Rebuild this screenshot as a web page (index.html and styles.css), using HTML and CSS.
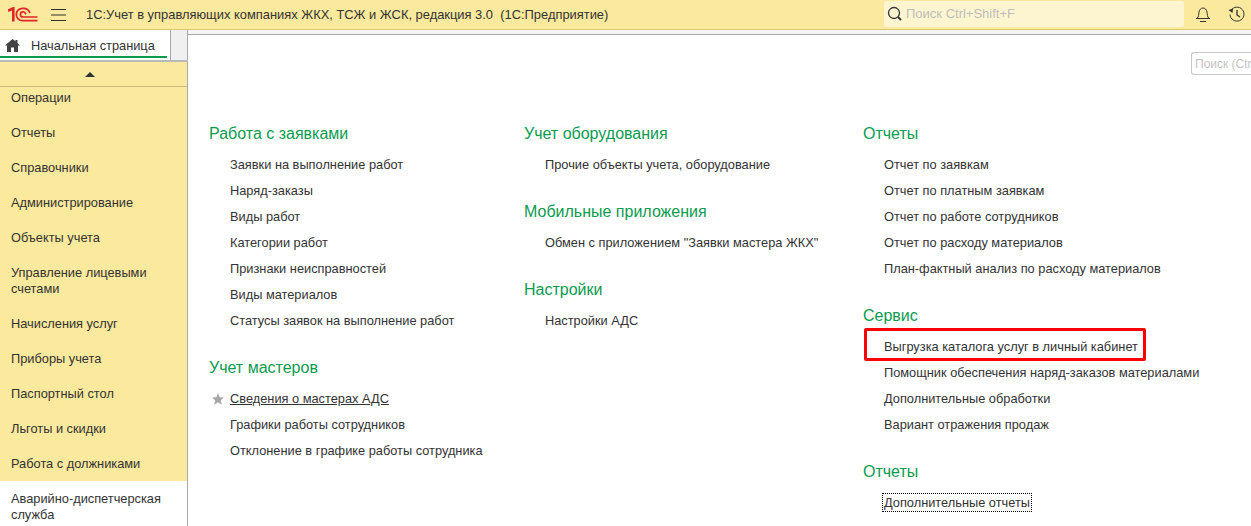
FILE: index.html
```html
<!DOCTYPE html>
<html lang="ru">
<head>
<meta charset="utf-8">
<title>1С:Учет</title>
<link rel="stylesheet" href="styles.css">
</head>
<body>
<header class="topbar">
  <svg class="logo" width="30" height="15" viewBox="0 0 30 15"><g fill="none" stroke="#e0262b"><path d="M0 3.800 L5.300 1.300 V14.500" stroke-width="2.600"/><path d="M29.500 13.700 H14.500 a6.200 6.200 0 0 1 0 -12.400 h1 q4.500 0 6.500 4.700" stroke-width="1.800"/><path d="M29.500 10 H15 a2.600 2.600 0 0 1 0 -5.200 h.5 q1.500 0 2.500 2.600" stroke-width="1.700"/></g></svg>
  <svg class="burger" width="15" height="12" viewBox="0 0 15 12"><path d="M0 .5h15M0 6h15M0 11.500h15" stroke="#333" stroke-width="1"/></svg>
  <div class="apptitle">1С:Учет в управляющих компаниях ЖКХ, ТСЖ и ЖСК, редакция 3.0&nbsp; (1С:Предприятие)</div>
  <div class="globalsearch">
    <svg width="16" height="16" viewBox="0 0 16 16"><circle cx="7" cy="7" r="5.500" fill="none" stroke="#333" stroke-width="1.300"/><path d="M11 11l3 3" stroke="#333" stroke-width="2"/></svg>
    <span>Поиск Ctrl+Shift+F</span>
  </div>
  <svg class="bell" width="16" height="17" viewBox="0 0 16 17"><path d="M2 12.500c2-2 1.500-4 2-6.500C4.500 3.500 6 2 8 2s3.500 1.500 4 4c.5 2.500 0 4.500 2 6.500z" fill="none" stroke="#333"/><path d="M1 12.500h14M5 15.500h6" stroke="#333"/></svg>
  <svg class="history" width="17" height="17" viewBox="0 0 17 17"><path d="M3 4.500A7 7 0 1 1 2 8.500" fill="none" stroke="#333"/><path d="M0.500 4 L5 2.500 4.500 7z" fill="#333"/><path d="M9 4v5l3 2" fill="none" stroke="#333" stroke-width="1.300"/></svg>
</header>
<div class="workspace">
  <aside class="left">
    <div class="tabrow">
      <div class="tab">
        <svg width="15" height="13" viewBox="0 0 15 13"><path d="M7.500 0L0 6.500h2V13h4V8.500h3V13h4V6.500h2L12.500 4V1h-2v1.200z" fill="#444"/></svg>
        <span>Начальная страница</span>
      </div>
      <div class="tabgap"></div>
    </div>
    <nav class="sections">
      <div class="scrollup"><i class="arrow"></i></div>
      <div class="section first">Операции</div>
      <div class="section">Отчеты</div>
      <div class="section">Справочники</div>
      <div class="section">Администрирование</div>
      <div class="section">Объекты учета</div>
      <div class="section">Управление лицевыми счетами</div>
      <div class="section">Начисления услуг</div>
      <div class="section">Приборы учета</div>
      <div class="section">Паспортный стол</div>
      <div class="section">Льготы и скидки</div>
      <div class="section">Работа с должниками</div>
      <div class="section active">Аварийно-диспетчерская служба</div>
    </nav>
  </aside>
  <main class="content">
    <div class="findbar"><input class="findbox" placeholder="Поиск (Ctrl+F)"></div>
    <div class="columns">
      <div class="col">
        <section class="group">
          <h2>Работа с заявками</h2>
          <a>Заявки на выполнение работ</a>
          <a>Наряд-заказы</a>
          <a>Виды работ</a>
          <a>Категории работ</a>
          <a>Признаки неисправностей</a>
          <a>Виды материалов</a>
          <a>Статусы заявок на выполнение работ</a>
        </section>
        <section class="group">
          <h2>Учет мастеров</h2>
          <a class="fav"><svg class="star" width="12" height="12" viewBox="0 0 12 12"><path d="M6 0l1.700 4.200 4.300.3-3.300 2.800 1.100 4.400L6 9.300 2.200 11.700l1.100-4.400L0 4.500l4.300-.3z" fill="#a6a6a6"/></svg><u>Сведения о мастерах АДС</u></a>
          <a>Графики работы сотрудников</a>
          <a>Отклонение в графике работы сотрудника</a>
        </section>
      </div>
      <div class="col second">
        <section class="group">
          <h2>Учет оборудования</h2>
          <a>Прочие объекты учета, оборудование</a>
        </section>
        <section class="group">
          <h2>Мобильные приложения</h2>
          <a>Обмен с приложением "Заявки мастера ЖКХ"</a>
        </section>
        <section class="group">
          <h2>Настройки</h2>
          <a>Настройки АДС</a>
        </section>
      </div>
      <div class="col">
        <section class="group">
          <h2>Отчеты</h2>
          <a>Отчет по заявкам</a>
          <a>Отчет по платным заявкам</a>
          <a>Отчет по работе сотрудников</a>
          <a>Отчет по расходу материалов</a>
          <a>План-фактный анализ по расходу материалов</a>
        </section>
        <section class="group">
          <h2>Сервис</h2>
          <a class="marked">Выгрузка каталога услуг в личный кабинет</a>
          <a>Помощник обеспечения наряд-заказов материалами</a>
          <a>Дополнительные обработки</a>
          <a>Вариант отражения продаж</a>
        </section>
        <section class="group">
          <h2>Отчеты</h2>
          <a><span class="focused">Дополнительные отчеты</span></a>
        </section>
      </div>
    </div>
  </main>
</div>
</body>
</html>
```
FILE: styles.css
```css
* { box-sizing: border-box; }
html, body { margin: 0; height: 526px; overflow: hidden; background: #fff; }
body { font: 12.800px/16px "Liberation Sans", Arial, sans-serif; color: #333; display: flex; flex-direction: column; }

.topbar { height: 30px; flex: none; display: flex; align-items: center; background: #fbe99d; border-bottom: 1px solid #d9c776; padding-left: 8px; }
.logo { flex: none; }
.burger { flex: none; margin-left: 13px; }
.apptitle { flex: none; width: 798px; margin-left: 20px; font-size: 12.900px; white-space: nowrap; }
.globalsearch { flex: none; width: 300px; height: 26px; margin-bottom: 2px; display: flex; align-items: center; gap: 3px; padding-left: 3px; background: #fdf5cf; border-radius: 2px; color: #bdbdbd; font-size: 13px; }
.bell { flex: none; margin-left: 11px; }
.history { flex: none; margin-left: 17px; }

.workspace { flex: 1; min-height: 0; display: flex; background: #f4f4f4; }
.left { flex: none; width: 188px; display: flex; flex-direction: column; }
.tabrow { flex: none; height: 32px; display: flex; border-bottom: 2px solid #b9b9b9; background: #f0f0f0; }
.tab { width: 171px; height: 30px; padding: 1px 0 0 5px; display: flex; align-items: center; gap: 11px; background: #fff; position: relative; border-right: 1px solid #a9a9a9; }
.tab::after { content: ""; position: absolute; left: 0; right: 3px; bottom: 2px; height: 2px; background: #0b9b4f; }
.tabgap { flex: 1; border-right: 1px solid #a9a9a9; }
.sections { flex: 1; min-height: 0; overflow: hidden; background: #fbe99d; border-right: 1px solid #a9a9a9; }
.scrollup { height: 25px; padding-right: 7px; display: flex; align-items: center; justify-content: center; border-bottom: 1px solid #cdbd85; }
.arrow { width: 0; height: 0; border: 5px solid transparent; border-top: 0; border-bottom: 5px solid #333; }
.section { padding: 10px 10px 9px 11px; }
.section.first { padding-top: 3px; }
.section.active { background: #fff; }

.content { flex: 1; min-width: 0; background: #fff; border-top: 1px solid #a9a9a9; margin-top: 4px; }
.findbar { height: 40px; padding: 17px 0 0 1003px; }
.findbox { display: block; width: 70px; height: 23px; padding: 0 3px; border: 1px solid #c8c8c8; border-right: 0; border-radius: 3px 0 0 3px; font: 12px "Liberation Sans", Arial, sans-serif; background: #fff; }
.findbox::placeholder { color: #c4c4c4; opacity: 1; }
.columns { display: grid; grid-template-columns: 315px 339px 1fr; padding: 48px 0 0 21px; }
.group { margin-bottom: 23px; display: flex; flex-direction: column; }
.group h2 { margin: 0 0 8px; font-weight: normal; font-size: 16px; line-height: 21px; color: #0b9b4f; }
.group a { height: 26px; line-height: 26px; padding-left: 21px; position: relative; white-space: nowrap; }
.star { position: absolute; left: 3px; top: 7px; }
.marked::after { content: ""; box-sizing: border-box; position: absolute; left: 1px; top: -6px; width: 282px; height: 33px; border: 3px solid #f00; border-radius: 2px; }
.focused { outline: 1px dotted #000; outline-offset: 1px; display: inline-block; line-height: 15px; }
```
